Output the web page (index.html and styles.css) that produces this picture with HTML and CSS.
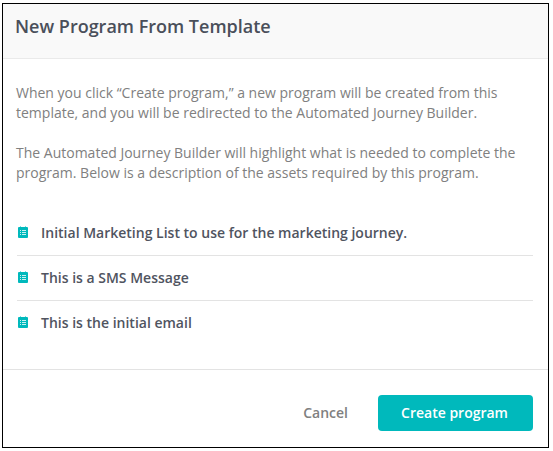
FILE: index.html
```html
<!DOCTYPE html>
<html lang="en">
<head>
<meta charset="UTF-8" />
<title>New Program From Template</title>
<link rel="stylesheet" href="styles.css">
</head>
<body>
<main class="modal">
  <header class="modal__head">
    <h1 class="modal__title">New Program From Template</h1>
  </header>
  <section class="modal__body">
    <p class="intro">When you click “Create program,” a new program will be created from this template, and you will be redirected to the Automated Journey Builder.</p>
    <p class="intro">The Automated Journey Builder will highlight what is needed to complete the program. Below is a description of the assets required by this program.</p>
    <ul class="assets">
      <li class="asset">
        <svg class="asset__icon" viewBox="0 0 10 12"><path fill="#00b9bc" d="M0 2a1 1 0 0 1 1-1h8a1 1 0 0 1 1 1v9a1 1 0 0 1-1 1H1a1 1 0 0 1-1-1z"/><path fill="#7fdcde" d="M2 0h1v1H2zM7 0h1v1H7z"/><path fill="#c9f1f1" d="M2 4h1v1H2zM4 4h4v1H4zM2 6h1v1H2zM4 6h4v1H4zM2 8h1v1H2zM4 8h4v1H4z"/></svg>
        <span>Initial Marketing List to use for the marketing journey.</span>
      </li>
      <li class="asset">
        <svg class="asset__icon" viewBox="0 0 10 12"><path fill="#00b9bc" d="M0 2a1 1 0 0 1 1-1h8a1 1 0 0 1 1 1v9a1 1 0 0 1-1 1H1a1 1 0 0 1-1-1z"/><path fill="#7fdcde" d="M2 0h1v1H2zM7 0h1v1H7z"/><path fill="#c9f1f1" d="M2 4h1v1H2zM4 4h4v1H4zM2 6h1v1H2zM4 6h4v1H4zM2 8h1v1H2zM4 8h4v1H4z"/></svg>
        <span>This is a SMS Message</span>
      </li>
      <li class="asset">
        <svg class="asset__icon" viewBox="0 0 10 12"><path fill="#00b9bc" d="M0 2a1 1 0 0 1 1-1h8a1 1 0 0 1 1 1v9a1 1 0 0 1-1 1H1a1 1 0 0 1-1-1z"/><path fill="#7fdcde" d="M2 0h1v1H2zM7 0h1v1H7z"/><path fill="#c9f1f1" d="M2 4h1v1H2zM4 4h4v1H4zM2 6h1v1H2zM4 6h4v1H4zM2 8h1v1H2zM4 8h4v1H4z"/></svg>
        <span>This is the initial email</span>
      </li>
    </ul>
  </section>
  <footer class="modal__foot">
    <button type="button" class="btn btn--cancel">Cancel</button>
    <button type="button" class="btn btn--primary">Create program</button>
  </footer>
</main>
</body>
</html>
```

FILE: styles.css
```css
body {
  margin: 0;
  background: #fff;
  font-family: "Open Sans", sans-serif;
}
.modal {
  box-sizing: border-box;
  width: 547px;
  height: 445px;
  margin: 3px 0 0 2px;
  border: 1px solid #000;
  display: flex;
  flex-direction: column;
}
.modal__head {
  height: 55px;
  box-sizing: border-box;
  background: #f9f9f9;
  border-bottom: 1px solid #eaeaea;
  padding: 0 12px 10px;
  display: flex;
  align-items: center;
}
.modal__title {
  margin: 0;
  font-size: 18px;
  font-weight: 600;
  color: #4a4f5a;
}
.modal__body {
  flex: 1;
  padding: 24px 15px 0 13px;
}
.intro {
  margin: 0 0 20px;
  font-size: 14px;
  line-height: 20px;
  color: #808080;
}
.assets {
  list-style: none;
  margin: 0 0 0 1px;
  padding: 8px 0 0;
}
.asset {
  height: 45px;
  box-sizing: border-box;
  border-bottom: 1px solid #e3e3e3;
  padding-bottom: 2px;
  display: flex;
  align-items: center;
  gap: 13px;
  font-size: 14px;
  font-weight: 600;
  color: #50545f;
}
.asset:last-child {
  border-bottom: none;
}
.asset__icon {
  width: 10px;
  height: 12px;
  margin-left: 1px;
  margin-bottom: 1px;
}
.modal__foot {
  height: 78px;
  box-sizing: border-box;
  border-top: 1px solid #e3e3e3;
  padding: 25px 15px 0 0;
  display: flex;
  justify-content: flex-end;
  align-items: flex-start;
  gap: 30px;
}
.btn {
  border: none;
  background: none;
  font-family: inherit;
  font-size: 14px;
  font-weight: 600;
  padding: 0 0 2px;
  height: 36px;
}
.btn--cancel {
  color: #808080;
}
.btn--primary {
  width: 155px;
  padding-right: 2px;
  background: #00b9bc;
  color: #fff;
  border-radius: 4px;
}
```
